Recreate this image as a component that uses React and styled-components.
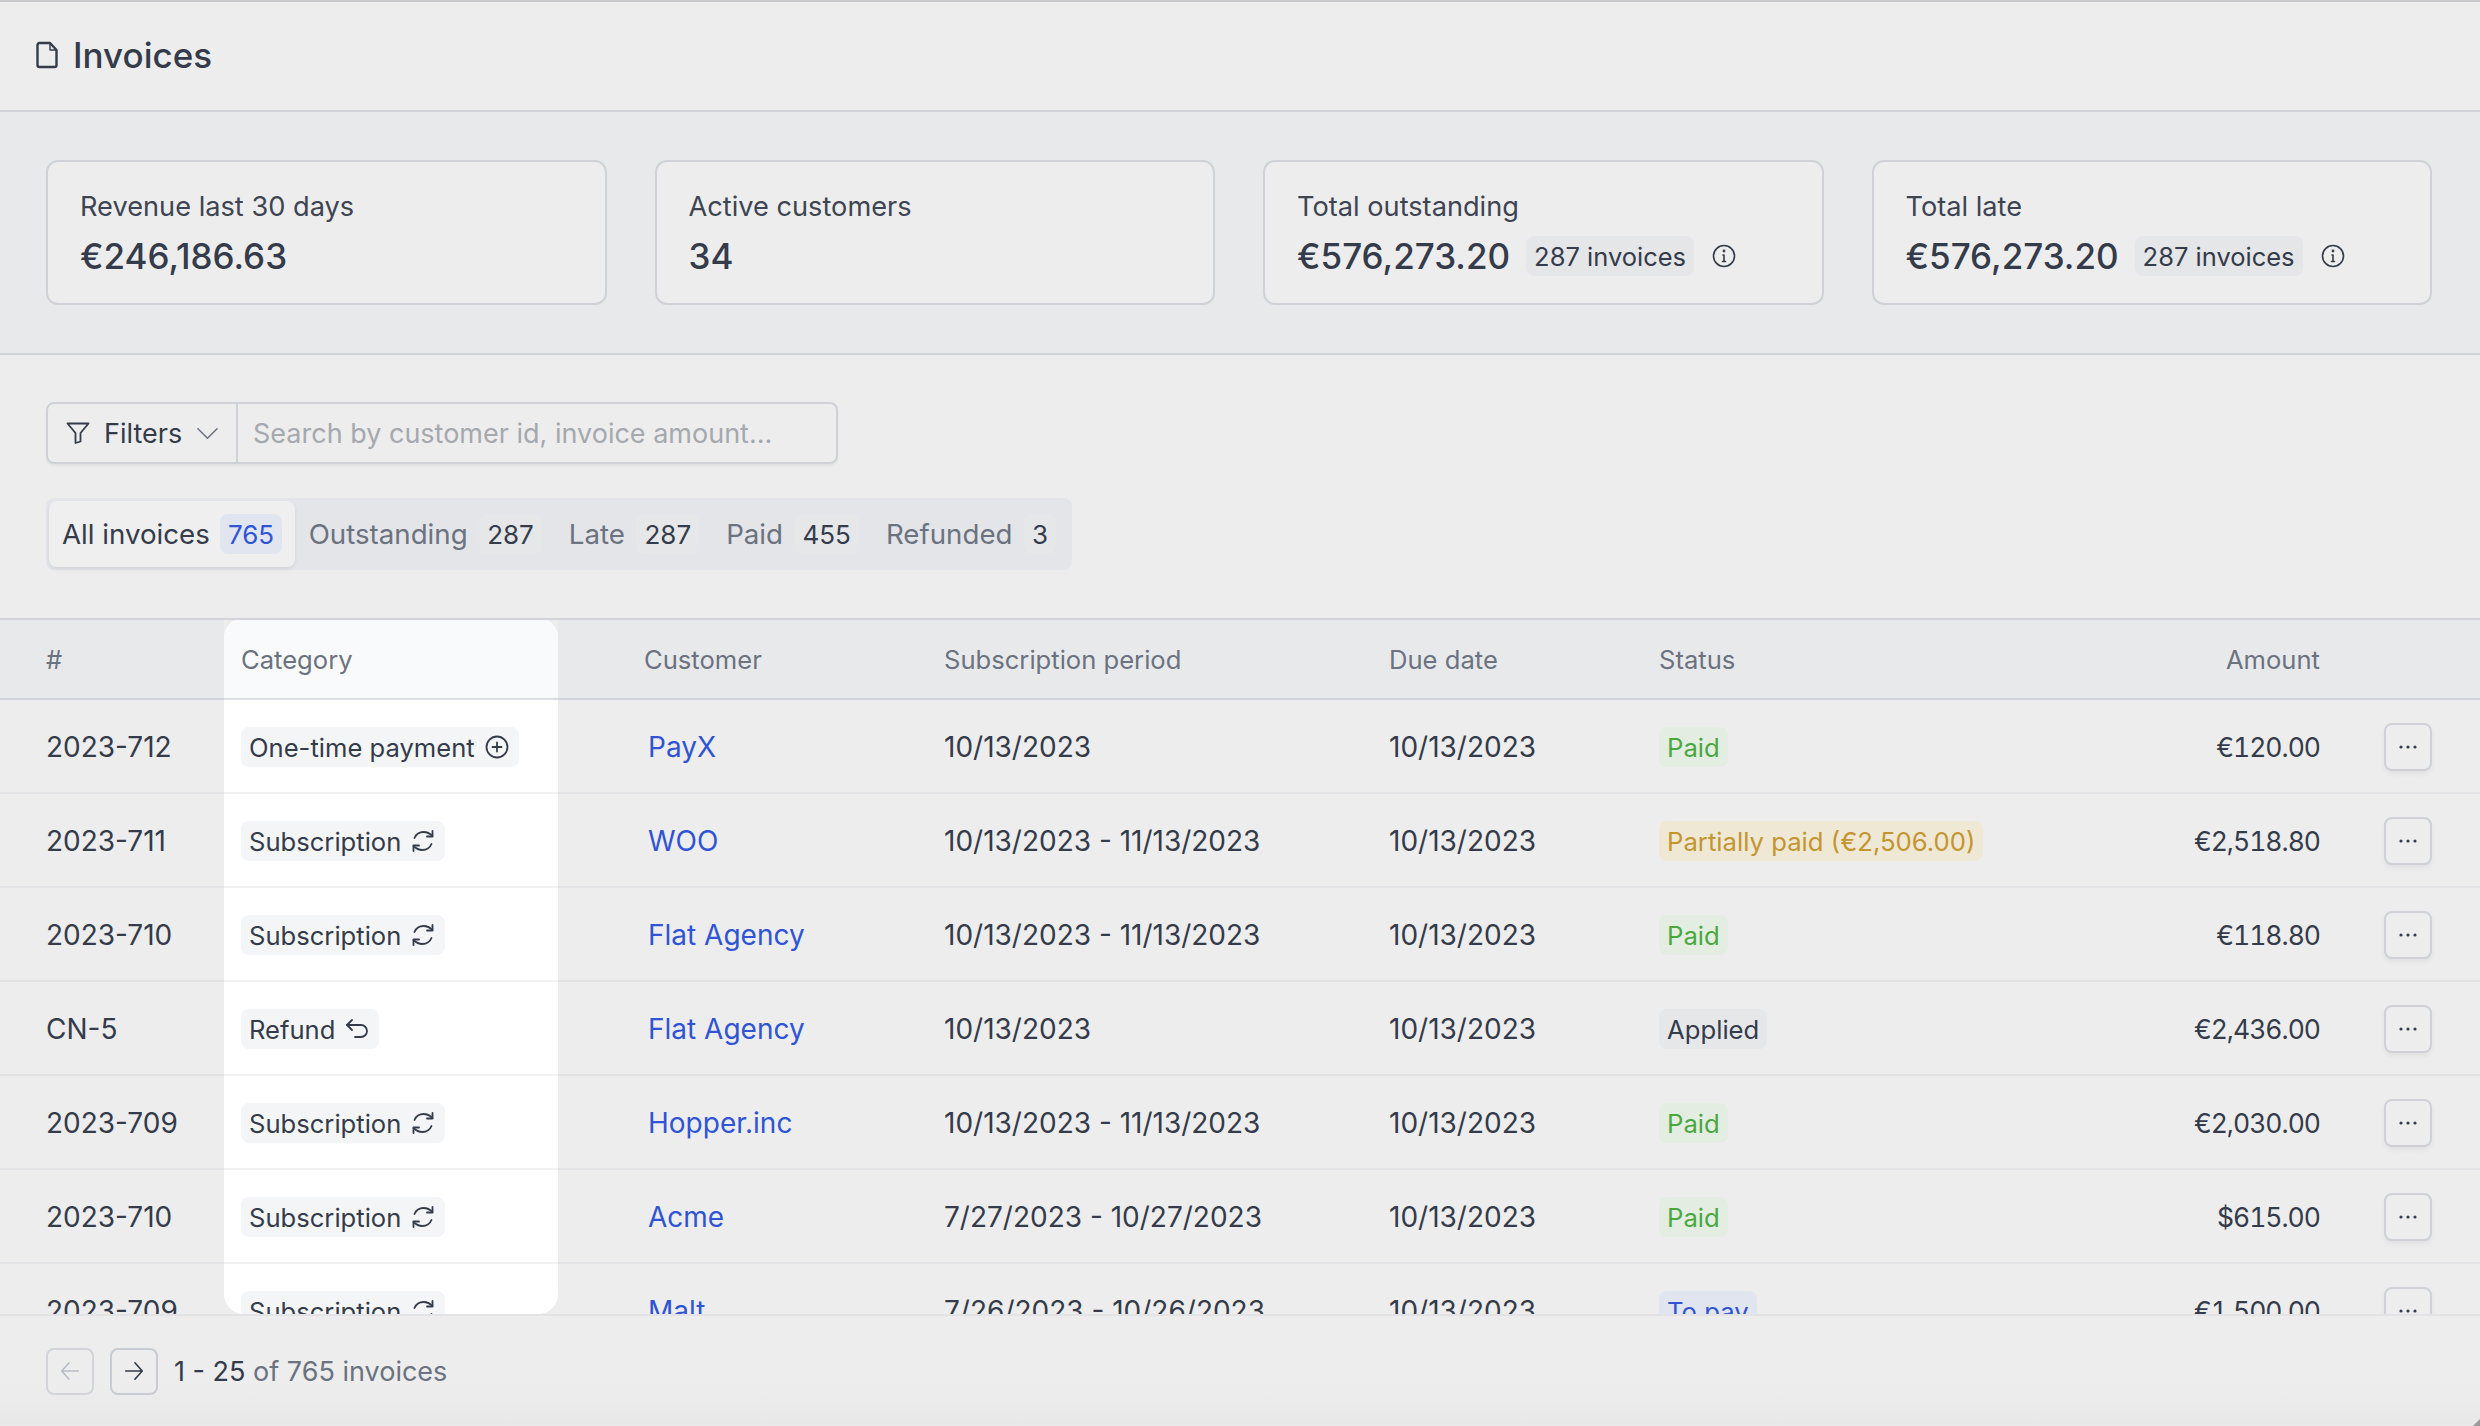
import React from "react";
import styled, { createGlobalStyle } from "styled-components";

const Global = createGlobalStyle`
  html, body { margin: 0; padding: 0; height: 100%; overflow: hidden; }
  #root { height: 100%; }
  * { box-sizing: border-box; }
  body { font-family: Inter, "Noto Sans", sans-serif; color: #343b4a; background: #ededed; }
`;

const Page = styled.div`
  position: relative;
  height: 1426px;
  display: flex;
  flex-direction: column;
  border-top: 2px solid #c9c9cc;
  overflow: hidden;
  background: #ededed;
`;

const Header = styled.header`
  height: 110px;
  flex: none;
  display: flex;
  align-items: center;
  gap: 14px;
  padding: 0 35px 2px;
  border-bottom: 2px solid #d0d1d6;
  background: #ededed;
`;
const Title = styled.h1`
  margin: 0;
  font-size: 35px;
  font-weight: 450;
  color: #343b4a;
`;

const Stats = styled.section`
  flex: none;
  display: grid;
  grid-template-columns: repeat(4, 1fr);
  gap: 48px;
  padding: 48px 48px 48px 46px;
  background: #e8e9eb;
  border-bottom: 2px solid #d2d3d8;
`;
const Card = styled.div`
  height: 145px;
  border: 2px solid #d0d1d6;
  border-radius: 12px;
  background: #ededed;
  padding: 27px 32px 0;
`;
const CardLabel = styled.div`
  font-size: 27.2px;
  line-height: 36px;
  color: #3d4452;
`;
const CardRow = styled.div`
  display: flex;
  align-items: center;
  margin-top: 9px;
`;
const CardValue = styled.div`
  font-size: 35px;
  line-height: 44px;
  font-weight: 450;
  color: #343b4a;
`;
const CountBadge = styled.span`
  margin-left: 16px;
  height: 40px;
  display: inline-flex;
  align-items: center;
  padding: 0 8px;
  border-radius: 8px;
  background: #e5e6e8;
  font-size: 25.5px;
  color: #343b4a;
`;
const InfoWrap = styled.span`
  display: inline-flex;
  margin-left: 18px;
`;

const Toolbar = styled.section`
  flex: none;
  padding: 47px 46px 48px;
  background: #ededed;
  display: flex;
  flex-direction: column;
  gap: 34px;
`;
const SearchGroup = styled.div`
  display: flex;
  width: 792px;
  height: 62px;
  border: 2px solid #cfd1d6;
  border-radius: 8px;
  box-shadow: 0 2px 3px rgba(0, 0, 0, 0.05);
  font-size: 27px;
`;
const FilterButton = styled.div`
  width: 190px;
  flex: none;
  display: flex;
  align-items: center;
  gap: 14px;
  padding-left: 18px;
  border-right: 2px solid #cfd1d6;
  color: #343b4a;
`;
const SearchPlaceholder = styled.div`
  display: flex;
  align-items: center;
  padding-left: 15px;
  color: #a5a8ad;
`;

const Tabs = styled.div`
  align-self: flex-start;
  height: 72px;
  width: 1026px;
  display: flex;
  align-items: center;
  padding: 0 3px;
  border-radius: 8px;
  background: #e4e5e8;
`;
const Tab = styled.div`
  height: 66px;
  display: flex;
  align-items: center;
  gap: ${(p) => (p.$active ? 10 : 11.5)}px;
  padding: 0 ${(p) => (p.$active ? "13px 0 13px" : "13.5px")};
  border-radius: 8px;
  font-size: 27.7px;
  white-space: nowrap;
  color: ${(p) => (p.$active ? "#343b4a" : "#6b7280")};
  background: ${(p) => (p.$active ? "#efefef" : "transparent")};
  box-shadow: ${(p) => (p.$active ? "0 2px 4px rgba(0,0,0,0.08)" : "none")};
`;
const TabCount = styled.span`
  height: 40px;
  display: inline-flex;
  align-items: center;
  padding: 0 8px;
  border-radius: 8px;
  font-size: 26px;
  color: ${(p) => (p.$active ? "#2f54d4" : "#343b4a")};
  background: ${(p) => (p.$active ? "#e0e5ef" : "#e6e7e9")};
`;

const Table = styled.div`
  flex: 1;
  min-height: 0;
  display: flex;
  overflow: hidden;
  background: #ededed;
  border-top: 2px solid #d2d3d8;
  border-bottom: 2px solid #e3e3e5;
  font-size: 28px;
`;
const Column = styled.div`
  flex: ${(p) => (p.$grow ? 1 : "none")};
  width: ${(p) => (p.$width ? `${p.$width}px` : "auto")};
  display: flex;
  flex-direction: column;
  min-height: 100%;
  overflow: hidden;
  ${(p) => (p.$highlight ? "background:#fff; border-radius: 20px; margin-top: -2px;" : "")}
`;
const HeadCell = styled.div`
  height: ${(p) => (p.$highlight ? 82 : 80)}px;
  flex: none;
  display: flex;
  align-items: center;
  justify-content: ${(p) => (p.$right ? "flex-end" : "flex-start")};
  padding: ${(p) => (p.$highlight ? 2 : 0)}px ${(p) => p.$pr || 0}px 0 ${(p) => p.$pl || 0}px;
  font-size: 25.6px;
  color: #6b7280;
  background: ${(p) => (p.$highlight ? "#f9fafb" : "#e8e9eb")};
  border-bottom: 2px solid ${(p) => (p.$highlight ? "#dcdde3" : "#d2d3d8")};
`;
const Cell = styled.div`
  height: 94px;
  flex: none;
  display: flex;
  align-items: center;
  justify-content: ${(p) => (p.$right ? "flex-end" : "flex-start")};
  padding: 2px ${(p) => p.$pr || 0}px 0 ${(p) => p.$pl || 0}px;
  color: #343b4a;
  border-bottom: 2px solid ${(p) => (p.$highlight ? "#f3f3f4" : "#e3e3e5")};
`;
const Amount = styled.span`
  font-size: 26.5px;
  letter-spacing: -1px;
  font-variant-numeric: tabular-nums;
`;
const Chip = styled.span`
  height: 40px;
  display: inline-flex;
  align-items: center;
  gap: 10px;
  padding: 0 10px 0 8px;
  border-radius: 8px;
  background: #f4f5f7;
  font-size: 25.6px;
  color: #343b4a;
`;
const CustomerLink = styled.a`
  color: #2f54d4;
  padding-left: 4px;
`;
const toneMap = {
  green: ["#e3ede2", "#4aa83f"],
  amber: ["#eee8d5", "#c4952f"],
  grey: ["#e6e7e9", "#343b4a"],
  blue: ["#e0e5ef", "#2f54d4"],
};
const StatusPill = styled.span`
  height: 40px;
  display: inline-flex;
  align-items: center;
  padding: 0 8px;
  border-radius: 8px;
  font-size: 25.7px;
  background: ${(p) => toneMap[p.$tone][0]};
  color: ${(p) => toneMap[p.$tone][1]};
`;
const DotsButton = styled.button`
  width: 48px;
  height: 48px;
  padding: 0;
  border: 2px solid #cfd1d6;
  border-radius: 8px;
  background: #ededed;
  box-shadow: 0 3px 5px rgba(0, 0, 0, 0.05);
  display: flex;
  align-items: center;
  justify-content: center;
`;

const Footer = styled.footer`
  flex: none;
  height: 110px;
  display: flex;
  align-items: center;
  padding: 0 46px;
  background: linear-gradient(#ededed 60%, #e8e8e8);
  font-size: 27px;
  color: #343b4a;
`;
const PageButton = styled.button`
  width: 48px;
  height: 47px;
  padding: 0;
  margin-right: 16px;
  border: 2px solid ${(p) => (p.disabled ? "#d2d4d9" : "#c8cbd1")};
  border-radius: 8px;
  background: transparent;
  display: flex;
  align-items: center;
  justify-content: center;
`;
const Muted = styled.span`
  color: #6b7280;
`;
const Corner = styled.div`
  position: absolute;
  right: -5px;
  bottom: -5px;
  width: 10px;
  height: 10px;
  transform: rotate(45deg);
  background: #9a9a9a;
`;

const Ic = ({ w = 24, h = 24, vb = "0 0 24 24", c = "#343b4a", sw = 1.8, children }) => (
  <svg width={w} height={h} viewBox={vb} fill="none" stroke={c} strokeWidth={sw} strokeLinecap="round" strokeLinejoin="round">
    {children}
  </svg>
);
const FileIcon = () => (
  <Ic w={24} h={28} vb="0 0 24 28" sw={2.4}>
    <path d="M15 2H4.5A2 2 0 0 0 2.5 4v20a2 2 0 0 0 2 2h15a2 2 0 0 0 2-2V9z" />
    <path d="M15 2v7h6.5" strokeWidth={1.4} />
  </Ic>
);
const FunnelIcon = () => (
  <Ic>
    <path d="M1.5 2.5h21l-8 9.5v8.5l-5 1.5V12z" />
  </Ic>
);
const Chevron = () => (
  <Ic w={23} h={23} c="#6b7280" sw={1.6}>
    <path d="M2 7l10 10L22 7" />
  </Ic>
);
const PlusCircle = () => (
  <Ic>
    <circle cx="12" cy="12" r="10.5" />
    <path d="M12 7.5v9M7.5 12h9" />
  </Ic>
);
const Refresh = () => (
  <Ic>
    <path d="M3.5 9C5 5.5 8.5 3 12.5 3c3.5 0 6.5 1.5 9 4" />
    <path d="M21.5 2v5.5H16" />
    <path d="M20.5 15c-1.5 3.5-5 6-9 6-3.5 0-6.5-1.5-9-4" />
    <path d="M2.5 22v-5.5H8" />
  </Ic>
);
const Uturn = () => (
  <Ic>
    <path d="M7 3 2 8l5 5" />
    <path d="M2 8h14a6 6 0 0 1 0 12h-6" />
  </Ic>
);
const InfoIcon = () => (
  <Ic w={24} h={24} sw={1.6}>
    <circle cx="12" cy="12" r="10.5" />
    <path d="M11 11h1v6.5M10.5 17.5h3" />
    <circle cx="12" cy="7" r=".6" />
  </Ic>
);
const ArrowLeft = ({ c }) => (
  <Ic c={c} w={22} h={22}>
    <path d="M21 12H3M11 3l-8 9 8 9" />
  </Ic>
);
const ArrowRight = ({ c }) => (
  <Ic c={c} w={22} h={22}>
    <path d="M3 12h18M13 3l8 9-8 9" />
  </Ic>
);
const Dots = () => (
  <svg width="18" height="4" viewBox="0 0 18 4" fill="#343b4a">
    <circle cx="2" cy="2" r="1.6" />
    <circle cx="9" cy="2" r="1.6" />
    <circle cx="16" cy="2" r="1.6" />
  </svg>
);

const rows = [
  { id: "2023-712", cat: "once", cust: "PayX", period: "10/13/2023", due: "10/13/2023", status: ["Paid", "green"], amount: "€120.00" },
  { id: "2023-711", cat: "sub", cust: "WOO", period: "10/13/2023 - 11/13/2023", due: "10/13/2023", status: ["Partially paid (€2,506.00)", "amber"], amount: "€2,518.80" },
  { id: "2023-710", cat: "sub", cust: "Flat Agency", period: "10/13/2023 - 11/13/2023", due: "10/13/2023", status: ["Paid", "green"], amount: "€118.80" },
  { id: "CN-5", cat: "refund", cust: "Flat Agency", period: "10/13/2023", due: "10/13/2023", status: ["Applied", "grey"], amount: "€2,436.00" },
  { id: "2023-709", cat: "sub", cust: "Hopper.inc", period: "10/13/2023 - 11/13/2023", due: "10/13/2023", status: ["Paid", "green"], amount: "€2,030.00" },
  { id: "2023-710", cat: "sub", cust: "Acme", period: "7/27/2023 - 10/27/2023", due: "10/13/2023", status: ["Paid", "green"], amount: "$615.00" },
  { id: "2023-709", cat: "sub", cust: "Malt", period: "7/26/2023 - 10/26/2023", due: "10/13/2023", status: ["To pay", "blue"], amount: "€1,500.00" },
];

const catChip = {
  once: ["One-time payment", PlusCircle],
  sub: ["Subscription", Refresh],
  refund: ["Refund", Uturn],
};

const stats = [
  { label: "Revenue last 30 days", value: "€246,186.63" },
  { label: "Active customers", value: "34" },
  { label: "Total outstanding", value: "€576,273.20", count: "287 invoices" },
  { label: "Total late", value: "€576,273.20", count: "287 invoices" },
];

const tabs = [
  ["All invoices", "765", true],
  ["Outstanding", "287"],
  ["Late", "287"],
  ["Paid", "455"],
  ["Refunded", "3"],
];

export default function App() {
  return (
    <Page>
      <Global />
      <Header>
        <FileIcon />
        <Title>Invoices</Title>
      </Header>
      <Stats>
        {stats.map((s) => (
          <Card key={s.label}>
            <CardLabel>{s.label}</CardLabel>
            <CardRow>
              <CardValue>{s.value}</CardValue>
              {s.count && (
                <>
                  <CountBadge>{s.count}</CountBadge>
                  <InfoWrap>
                    <InfoIcon />
                  </InfoWrap>
                </>
              )}
            </CardRow>
          </Card>
        ))}
      </Stats>
      <Toolbar>
        <SearchGroup>
          <FilterButton>
            <FunnelIcon />
            Filters
            <Chevron />
          </FilterButton>
          <SearchPlaceholder>Search by customer id, invoice amount...</SearchPlaceholder>
        </SearchGroup>
        <Tabs>
          {tabs.map(([label, n, active]) => (
            <Tab key={label} $active={active}>
              {label}
              <TabCount $active={active}>{n}</TabCount>
            </Tab>
          ))}
        </Tabs>
      </Toolbar>
      <Table>
        <Column $width={224}>
          <HeadCell $pl={46}>#</HeadCell>
          {rows.map((r, i) => (
            <Cell key={i} $pl={46}>{r.id}</Cell>
          ))}
        </Column>
        <Column $width={334} $highlight>
          <HeadCell $highlight $pl={17}>Category</HeadCell>
          {rows.map((r, i) => {
            const [label, Icon] = catChip[r.cat];
            return (
              <Cell key={i} $pl={17} $highlight>
                <Chip>
                  {label}
                  <Icon />
                </Chip>
              </Cell>
            );
          })}
        </Column>
        <Column $width={386}>
          <HeadCell $pl={86}>Customer</HeadCell>
          {rows.map((r, i) => (
            <Cell key={i} $pl={86}>
              <CustomerLink>{r.cust}</CustomerLink>
            </Cell>
          ))}
        </Column>
        <Column $width={445}>
          <HeadCell>Subscription period</HeadCell>
          {rows.map((r, i) => (
            <Cell key={i}>{r.period}</Cell>
          ))}
        </Column>
        <Column $width={270}>
          <HeadCell>Due date</HeadCell>
          {rows.map((r, i) => (
            <Cell key={i}>{r.due}</Cell>
          ))}
        </Column>
        <Column $width={441}>
          <HeadCell>Status</HeadCell>
          {rows.map((r, i) => (
            <Cell key={i}>
              <StatusPill $tone={r.status[1]}>{r.status[0]}</StatusPill>
            </Cell>
          ))}
        </Column>
        <Column $width={220}>
          <HeadCell $right>Amount</HeadCell>
          {rows.map((r, i) => (
            <Cell key={i} $right>
              <Amount>{r.amount}</Amount>
            </Cell>
          ))}
        </Column>
        <Column $grow>
          <HeadCell />
          {rows.map((r, i) => (
            <Cell key={i} $right $pr={48}>
              <DotsButton>
                <Dots />
              </DotsButton>
            </Cell>
          ))}
        </Column>
      </Table>
      <Footer>
        <PageButton disabled>
          <ArrowLeft c="#b9bcc2" />
        </PageButton>
        <PageButton>
          <ArrowRight c="#343b4a" />
        </PageButton>
        <div>
          1 - 25 <Muted>of 765 invoices</Muted>
        </div>
      </Footer>
      <Corner />
    </Page>
  );
}
